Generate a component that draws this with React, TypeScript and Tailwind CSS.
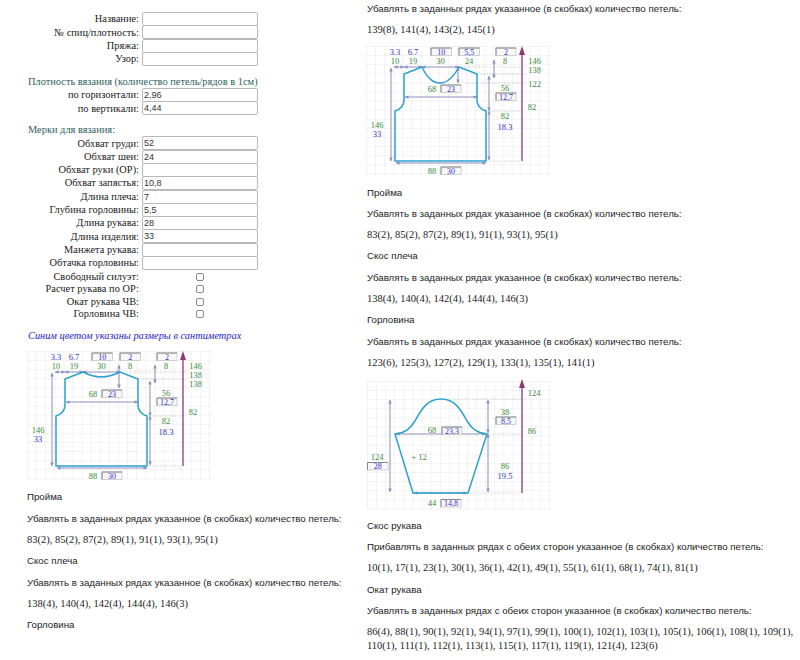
const serif = "font-['Liberation_Serif',serif]";

const FIELDS_TOP = [
  { label: "Название:", value: "" },
  { label: "№ спиц/плотность:", value: "" },
  { label: "Пряжа:", value: "" },
  { label: "Узор:", value: "" },
];

const FIELDS_GAUGE = [
  { label: "по горизонтали:", value: "2,96" },
  { label: "по вертикали:", value: "4,44" },
];

const FIELDS_SIZE = [
  { label: "Обхват груди:", value: "52" },
  { label: "Обхват шеи:", value: "24" },
  { label: "Обхват руки (ОР):", value: "" },
  { label: "Обхват запястья:", value: "10,8" },
  { label: "Длина плеча:", value: "7" },
  { label: "Глубина горловины:", value: "5,5" },
  { label: "Длина рукава:", value: "28" },
  { label: "Длина изделия:", value: "33" },
  { label: "Манжета рукава:", value: "" },
  { label: "Обтачка горловины:", value: "" },
];

const CHECKS = ["Свободный силуэт:", "Расчет рукава по ОР:", "Окат рукава ЧВ:", "Горловина ЧВ:"];

const DIM = "#8b90bd";
const CUT = "#2ba0cf";
const HEIGHT = "#8b3a78";

function Field({ label, value }: { label: string; value: string }) {
  return (
    <div className="flex h-[13.3px] items-center">
      <span className="w-[139px] shrink-0 text-right text-[10.4px] text-[#222]">{label}</span>
      <input
        readOnly
        value={value}
        className="ml-[3px] h-[14px] w-[116px] rounded-[2px] border border-[#b9b9b9] bg-white px-[1px] font-['Liberation_Sans',sans-serif] text-[9px] text-[#333]"
      />
    </div>
  );
}

function Check({ label }: { label: string }) {
  return (
    <div className="flex h-[12.5px] items-center">
      <span className="w-[139px] shrink-0 text-right text-[10.4px] text-[#222]">{label}</span>
      <input
        type="checkbox"
        readOnly
        className="ml-[57px] h-[8px] w-[8px] appearance-none rounded-[2px] border border-[#888] bg-white"
      />
    </div>
  );
}

function Grid({ id }: { id: string }) {
  return (
    <>
      <defs>
        <pattern id={id} width="9.1" height="9.1" patternUnits="userSpaceOnUse" x="7" y="6">
          <path d="M9.1 0H0V9.1" fill="none" stroke="#e0e0e6" strokeWidth="0.8" />
        </pattern>
      </defs>
      <rect x="7" y="6" width="185" height="129" fill={`url(#${id})`} />
    </>
  );
}

function Label({ x, y, t, c = "g" }: { x: number; y: number; t: string; c?: "g" | "b" }) {
  return (
    <text x={x} y={y} textAnchor="middle" fontSize="8.5" fontFamily="Liberation Serif, serif" fill={c === "g" ? "#3a8a3a" : "#3030cc"}>
      {t}
    </text>
  );
}

function Box({ x, y, w, t }: { x: number; y: number; w: number; t: string }) {
  return (
    <g>
      <rect x={x} y={y} width={w} height="7.5" fill="#f7f7f9" stroke="#d0d0d0" />
      <path d={`M${x} ${y + 7.5}V${y}H${x + w}`} fill="none" stroke="#888" />
      <text x={x + w / 2} y={y + 6.8} textAnchor="middle" fontSize="8" fontFamily="Liberation Serif, serif" fill="#3030cc">
        {t}
      </text>
    </g>
  );
}

// double-headed dimension arrows with small filled heads
function HDim({ x1, x2, y }: { x1: number; x2: number; y: number }) {
  return (
    <g fill={DIM} stroke="none">
      <rect x={x1} y={y - 0.5} width={x2 - x1} height="1" />
      <path d={`M${x1} ${y}l3.5 -1.8v3.6Z M${x2} ${y}l-3.5 -1.8v3.6Z`} />
    </g>
  );
}

function VDim({ x, y1, y2 }: { x: number; y1: number; y2: number }) {
  return (
    <g fill={DIM} stroke="none">
      <rect x={x - 0.5} y={y1} width="1" height={y2 - y1} />
      <path d={`M${x} ${y1}l-1.8 3.5h3.6Z M${x} ${y2}l-1.8 -3.5h3.6Z`} />
    </g>
  );
}

function HeightArrow({ x, y1, y2 }: { x: number; y1: number; y2: number }) {
  return (
    <g>
      <path d={`M${x} ${y2}V${y1 + 6}`} stroke={HEIGHT} strokeWidth="1.3" fill="none" />
      <path d={`M${x} ${y1}l3 9h-6Z`} fill={HEIGHT} />
    </g>
  );
}

function Dots({ d }: { d: string }) {
  return <path d={d} stroke="#b5b5b5" strokeDasharray="1 1.5" fill="none" strokeWidth="0.8" />;
}

function Vest({ id, deep }: { id: string; deep?: boolean }) {
  return (
    <svg width="200" height="140" viewBox="0 0 200 140" className="block">
      <Grid id={id} />
      <Dots d={deep ? "M100 27H168M118 34H168M108 43H168M130 71H162M130 121H163" : "M100 27H168M118 34H168M130 71H162M130 121H163"} />
      <VDim x={32} y1={28} y2={121} />
      <HDim x1={35} x2={45} y={27} />
      <HDim x1={45} x2={63} y={27} />
      <HDim x1={63} x2={100} y={27} />
      <HDim x1={46} x2={118} y={57} />
      <HDim x1={37} x2={127} y={123} />
      <VDim x={99} y1={deep ? 27 : 20} y2={43} />
      <VDim x={135} y1={20} y2={38} />
      <VDim x={130} y1={36} y2={71} />
      <VDim x={130} y1={71} y2={120} />
      <HeightArrow x={163} y1={6} y2={121} />
      <path
        d={
          deep
            ? "M63 27L45 34V60C45 66 42 69 36 71V121H127V71C121 69 118 66 118 60V34L100 27C94 38 88 43 81 43C74 43 68 38 63 27Z"
            : "M63 27L45 34V60C45 66 42 69 36 71V121H127V71C121 69 118 66 118 60V34L100 27C94 30 88 32 81 32C74 32 69 30 63 27Z"
        }
        fill="none"
        stroke={CUT}
        strokeWidth="1.5"
      />
      <Label x={36} y={15} t="3.3" c="b" />
      <Label x={54} y={15} t="6.7" c="b" />
      <Label x={36} y={23.5} t="10" />
      <Label x={54} y={23.5} t="19" />
      <Label x={81.5} y={23.5} t="30" />
      <Label x={110} y={23.5} t={deep ? "24" : "8"} />
      <Label x={146} y={23.5} t="8" />
      <Box x={72} y={8} w={20.5} t="10" />
      <Box x={100} y={8} w={20.5} t={deep ? "5,5" : "2"} />
      <Box x={137} y={8} w={20} t="2" />
      <Label x={175.5} y={23.5} t="146" />
      <Label x={175.5} y={33} t="138" />
      <Label x={175.5} y={deep ? 47 : 42} t={deep ? "122" : "138"} />
      <Label x={173} y={70} t="82" />
      <Label x={146} y={51} t="56" />
      <Box x={137} y={53} w={20} t="12,7" />
      <Label x={146} y={79} t="82" />
      <Label x={146} y={90} t="18.3" c="b" />
      <Label x={73} y={52} t="68" />
      <Box x={82} y={45} w={20} t="23" />
      <Label x={18} y={88} t="146" />
      <Label x={18} y={97} t="33" c="b" />
      <Label x={73} y={134} t="88" />
      <Box x={82} y={127} w={20} t="30" />
    </svg>
  );
}

function Sleeve() {
  return (
    <svg width="200" height="140" viewBox="0 0 200 140" className="block">
      <Grid id="grid-sleeve" />
      <Dots d="M92 24H166M128 59H163M108 118H160" />
      <VDim x={30} y1={25} y2={117} />
      <VDim x={128} y1={25} y2={58} />
      <VDim x={128} y1={59} y2={117} />
      <HDim x1={36} x2={126} y={59} />
      <HDim x1={54} x2={107} y={118} />
      <path
        d="M35 59C45 58 50 54 55 46C62 33 68 24 81 24C94 24 100 33 107 46C112 54 117 58 127 59L108 118H53Z"
        fill="none"
        stroke={CUT}
        strokeWidth="1.5"
      />
      <HeightArrow x={162} y1={4} y2={118} />
      <Label x={174} y={21} t="124" />
      <Label x={172} y={59} t="86" />
      <Label x={145} y={40} t="38" />
      <Box x={136} y={42} w={20} t="8,5" />
      <Label x={72} y={58} t="68" />
      <Box x={82} y={52} w={20} t="23,3" />
      <Label x={59} y={85} t="+ 12" />
      <Label x={17} y={85} t="124" />
      <Box x={7.5} y={87.5} w={20.5} t="28" />
      <Label x={145} y={94} t="86" />
      <Label x={145} y={104} t="19.5" c="b" />
      <Label x={72} y={131} t="44" />
      <Box x={81} y={124.5} w={20} t="14,8" />
    </svg>
  );
}

function Note({ children }: { children: string }) {
  return <p className="mb-2 h-[13.3px] font-['Liberation_Sans',sans-serif] text-[9.7px] leading-[13.3px] text-[#222]">{children}</p>;
}

function Rows({ children }: { children: string }) {
  return <p className={`mb-2 ${serif} text-[10.5px] leading-[13.3px] text-[#222]`}>{children}</p>;
}

export default function App() {
  return (
    <div className={`flex h-[660px] overflow-hidden bg-white ${serif}`}>
      <div className="w-[367px] shrink-0">
        <div className="pt-[12.5px]">
          {FIELDS_TOP.map((f) => (
            <Field key={f.label} {...f} />
          ))}
        </div>
        <h3 className="mt-[9.5px] pl-[28px] text-[10.4px] leading-[13.3px] text-[#2f5f5f]">
          Плотность вязания (количество петель/рядов в 1см)
        </h3>
        {FIELDS_GAUGE.map((f) => (
          <Field key={f.label} {...f} />
        ))}
        <h3 className="mt-[8.3px] pl-[28px] text-[10.4px] leading-[13.3px] text-[#2f5f5f]">Мерки для вязания:</h3>
        {FIELDS_SIZE.map((f) => (
          <Field key={f.label} {...f} />
        ))}
        <div className="mt-[0.7px]">
          {CHECKS.map((c) => (
            <Check key={c} label={c} />
          ))}
        </div>
        <p className="mt-[8.7px] pl-[28px] text-[10.35px] leading-[13.3px] text-[#2222cc] italic">
          Синим цветом указаны размеры в сантиметрах
        </p>
        <div className="mt-[2.6px] ml-[20px]">
          <Vest id="grid-a" />
        </div>
        <div className="pl-[27px] pt-[5.5px]">
          <Note>Пройма</Note>
          <Note>Убавлять в заданных рядах указанное (в скобках) количество петель:</Note>
          <Rows>83(2), 85(2), 87(2), 89(1), 91(1), 93(1), 95(1)</Rows>
          <Note>Скос плеча</Note>
          <Note>Убавлять в заданных рядах указанное (в скобках) количество петель:</Note>
          <Rows>138(4), 140(4), 142(4), 144(4), 146(3)</Rows>
          <Note>Горловина</Note>
        </div>
      </div>
      <div className="flex-1 pt-[1.5px]">
        <Note>Убавлять в заданных рядах указанное (в скобках) количество петель:</Note>
        <Rows>139(8), 141(4), 143(2), 145(1)</Rows>
        <div className="-mt-[4px] -ml-[8px]">
          <Vest id="grid-b" deep />
        </div>
        <div className="pt-[5.5px]">
          <Note>Пройма</Note>
          <Note>Убавлять в заданных рядах указанное (в скобках) количество петель:</Note>
          <Rows>83(2), 85(2), 87(2), 89(1), 91(1), 93(1), 95(1)</Rows>
          <Note>Скос плеча</Note>
          <Note>Убавлять в заданных рядах указанное (в скобках) количество петель:</Note>
          <Rows>138(4), 140(4), 142(4), 144(4), 146(3)</Rows>
          <Note>Горловина</Note>
          <Note>Убавлять в заданных рядах указанное (в скобках) количество петель:</Note>
          <Rows>123(6), 125(3), 127(2), 129(1), 133(1), 135(1), 141(1)</Rows>
        </div>
        <div className="-mt-[2px] -ml-[7px]">
          <Sleeve />
        </div>
        <div className="pt-[3.5px]">
          <Note>Скос рукава</Note>
          <Note>Прибавлять в заданных рядах с обеих сторон указанное (в скобках) количество петель:</Note>
          <Rows>10(1), 17(1), 23(1), 30(1), 36(1), 42(1), 49(1), 55(1), 61(1), 68(1), 74(1), 81(1)</Rows>
          <Note>Окат рукава</Note>
          <Note>Убавлять в заданных рядах с обеих сторон указанное (в скобках) количество петель:</Note>
          <Rows>
            86(4), 88(1), 90(1), 92(1), 94(1), 97(1), 99(1), 100(1), 102(1), 103(1), 105(1), 106(1), 108(1), 109(1), 110(1), 111(1), 112(1), 113(1), 115(1), 117(1), 119(1), 121(4), 123(6)
          </Rows>
        </div>
      </div>
    </div>
  );
}
